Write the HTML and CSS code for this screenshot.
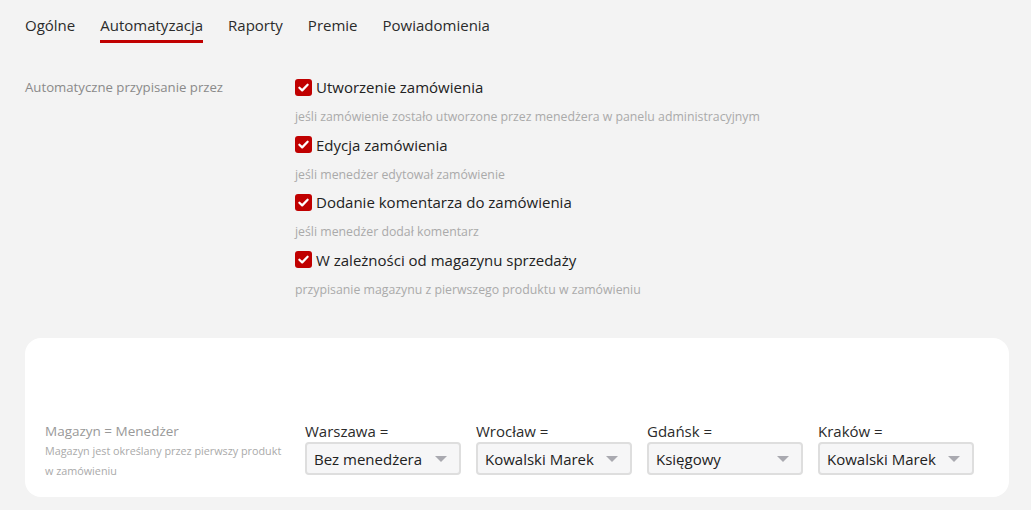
FILE: index.html
```html
<!DOCTYPE html>
<html lang="pl">
<head>
<meta charset="utf-8">
<link rel="stylesheet" href="styles.css">
</head>
<body>
<nav class="tabs">
  <a class="tab">Ogólne</a>
  <a class="tab active">Automatyzacja</a>
  <a class="tab">Raporty</a>
  <a class="tab">Premie</a>
  <a class="tab">Powiadomienia</a>
</nav>

<section class="auto">
  <div class="auto-label">Automatyczne przypisanie przez</div>
  <div class="options">
    <div class="opt">
      <label class="check"><span class="box"><svg viewBox="0 0 16 16"><path d="M3.6 8.2l3 2.9 5.8-6" fill="none" stroke="#fff" stroke-width="2.4" stroke-linecap="round" stroke-linejoin="round"/></svg></span>Utworzenie zamówienia</label>
      <div class="hint">jeśli zamówienie zostało utworzone przez menedżera w panelu administracyjnym</div>
    </div>
    <div class="opt">
      <label class="check"><span class="box"><svg viewBox="0 0 16 16"><path d="M3.6 8.2l3 2.9 5.8-6" fill="none" stroke="#fff" stroke-width="2.4" stroke-linecap="round" stroke-linejoin="round"/></svg></span>Edycja zamówienia</label>
      <div class="hint">jeśli menedżer edytował zamówienie</div>
    </div>
    <div class="opt">
      <label class="check"><span class="box"><svg viewBox="0 0 16 16"><path d="M3.6 8.2l3 2.9 5.8-6" fill="none" stroke="#fff" stroke-width="2.4" stroke-linecap="round" stroke-linejoin="round"/></svg></span>Dodanie komentarza do zamówienia</label>
      <div class="hint">jeśli menedżer dodał komentarz</div>
    </div>
    <div class="opt">
      <label class="check"><span class="box"><svg viewBox="0 0 16 16"><path d="M3.6 8.2l3 2.9 5.8-6" fill="none" stroke="#fff" stroke-width="2.4" stroke-linecap="round" stroke-linejoin="round"/></svg></span>W zależności od magazynu sprzedaży</label>
      <div class="hint">przypisanie magazynu z pierwszego produktu w zamówieniu</div>
    </div>
  </div>
</section>

<section class="card">
  <div class="card-desc">
    <div class="card-title">Magazyn = Menedżer</div>
    <div class="card-sub">Magazyn jest określany przez pierwszy produkt w zamówieniu</div>
  </div>
  <div class="fields">
    <div class="field">
      <div class="field-label">Warszawa =</div>
      <div class="select"><span>Bez menedżera</span><i class="arrow"></i></div>
    </div>
    <div class="field">
      <div class="field-label">Wrocław =</div>
      <div class="select"><span>Kowalski Marek</span><i class="arrow"></i></div>
    </div>
    <div class="field">
      <div class="field-label">Gdańsk =</div>
      <div class="select"><span>Księgowy</span><i class="arrow"></i></div>
    </div>
    <div class="field">
      <div class="field-label">Kraków =</div>
      <div class="select"><span>Kowalski Marek</span><i class="arrow"></i></div>
    </div>
  </div>
</section>
</body>
</html>
```
FILE: styles.css
```css
* { box-sizing: border-box; }
html, body { margin: 0; padding: 0; }
body {
  background: #f3f3f3;
  font-family: "Open Sans", "Noto Sans", sans-serif;
  color: #2b2b2b;
  width: 1031px;
  height: 510px;
  overflow: hidden;
}
.tabs {
  display: flex;
  gap: 25px;
  padding: 13px 0 0 25px;
}
.tab {
  font-size: 15px;
  line-height: 24px;
  padding-bottom: 3px;
  border-bottom: 3px solid transparent;
  color: #2b2b2b;
}
.tab.active { border-bottom-color: #c00000; }

.auto {
  display: flex;
  padding: 32px 0 0 25px;
}
.auto-label {
  width: 270px;
  font-size: 13.2px;
  color: #8a8a8a;
  line-height: 24px;
}
.options { display: flex; flex-direction: column; }
.opt { height: 57.5px; }
.check {
  display: flex;
  align-items: center;
  gap: 4px;
  font-size: 15px;
  line-height: 24px;
  color: #222;
}
.box {
  width: 17px;
  height: 17px;
  border-radius: 3px;
  background: #c00000;
  display: inline-flex;
  align-items: center;
  justify-content: center;
}
.box svg { width: 15px; height: 15px; }
.hint {
  margin-top: 8px;
  font-size: 12.3px;
  line-height: 20px;
  color: #aaa;
}

.card {
  margin: 33px 22px 0 25px;
  height: 159px;
  background: #fff;
  border-radius: 16px;
  display: flex;
  align-items: flex-end;
  padding: 0 0 16px 20px;
}
.card-desc { width: 260px; }
.card-title { font-size: 13.5px; color: #999; line-height: 20px; }
.card-sub { font-size: 10.8px; color: #aaa; line-height: 20px; width: 242px; }
.fields { display: flex; gap: 15px; padding-bottom: 6px; }
.field { width: 156px; }
.field-label { font-size: 15px; line-height: 20px; color: #2b2b2b; margin-bottom: 1px; }
.select {
  height: 33px;
  border: 2px solid #dedede;
  border-radius: 4px;
  background: #f6f6f7;
  display: flex;
  align-items: center;
  justify-content: space-between;
  padding: 0 12px 0 7px;
  font-size: 15px;
  color: #222;
}
.arrow {
  width: 0; height: 0;
  border-left: 6px solid transparent;
  border-right: 6px solid transparent;
  border-top: 6px solid #a9a9b0;
}
```
